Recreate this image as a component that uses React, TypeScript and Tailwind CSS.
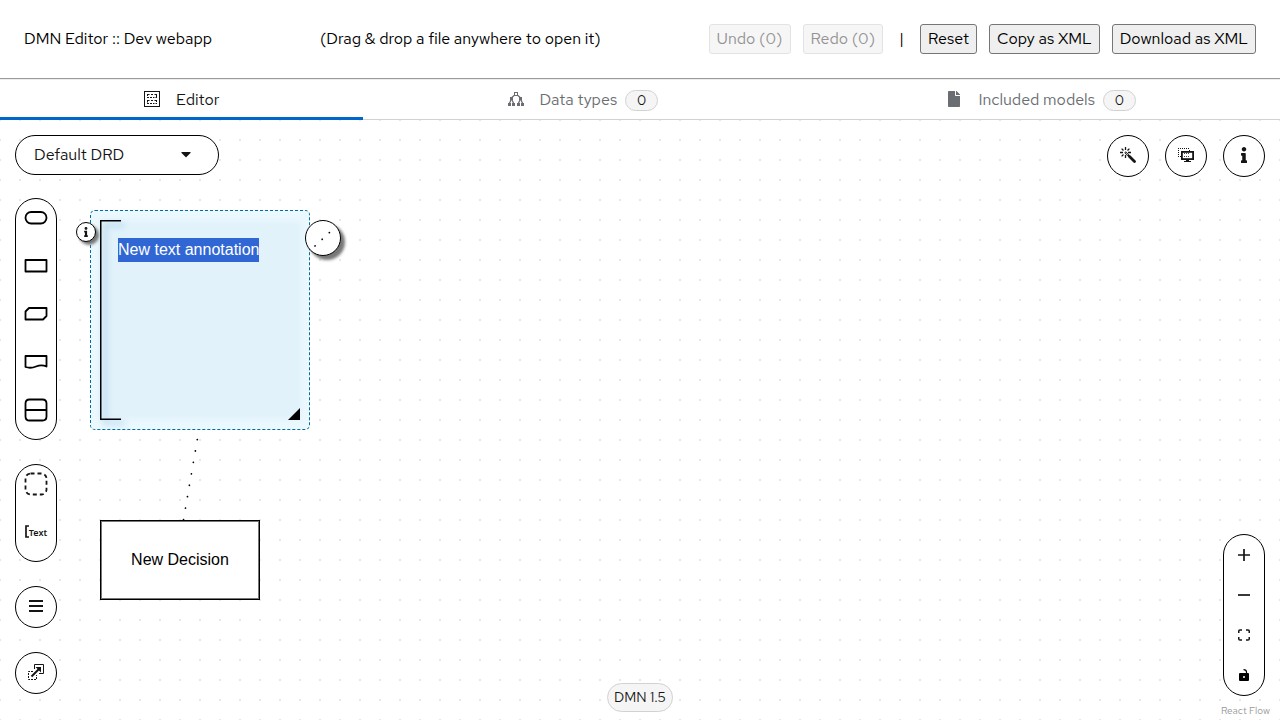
import { useEffect, useRef, useState } from "react";
import type { ReactNode } from "react";
import { FaCaretDown, FaFile, FaInfo } from "react-icons/fa";

function EditorIcon() {
  return (
    <svg width="16" height="16" viewBox="0 0 16 16" fill="none" stroke="currentColor" aria-hidden="true">
      <rect x="0.5" y="0.5" width="15" height="15" />
      <path d="M3 3.500H5.500M7 3.500H9M10.500 3.500H13M3 6.500H5M6 6.500H8M9 6.500H10.500M11.500 6.500H13M3.500 3V5M12.500 3V7M3 9.500H5.500M7 9.500H9M10.500 9.500H13M3 12.500H5M6 12.500H8M9 12.500H10.500M11.500 12.500H13M3.500 9V11M3.500 11.500V13M12.500 9V11" />
    </svg>
  );
}

function DataTypesIcon() {
  return (
    <svg width="16" height="16" viewBox="0 0 16 16" fill="none" stroke="currentColor" aria-hidden="true">
      <rect x="6.5" y="1.5" width="3" height="3" />
      <path d="M6 4.500L3.500 7M10 4.500L12.500 7M3 9L1.500 12M4 9L5.500 12M12 9L10.500 12M13 9L14.500 12" strokeWidth="1.300" />
      <path d="M2 6h3v3H2zM11 6h3v3h-3zM0 12h3v3H0zM4 12h3v3H4zM9 12h3v3H9zM13 12h3v3h-3z" fill="currentColor" stroke="none" />
    </svg>
  );
}

function WandIcon() {
  return (
    <svg width="16" height="16" viewBox="0 0 16 16" fill="none" stroke="currentColor" aria-hidden="true">
      <path d="M9.500 9.500L14.500 14.500" strokeWidth="2.800" strokeLinecap="round" />
      <path d="M5 5L9 9" strokeWidth="2" />
      <path d="M5.500 0V3M5.500 8V11M0 5.500H3M8 5.500H11M1.600 1.600L3.500 3.500M9.400 1.600L7.500 3.500M1.600 9.400L3.500 7.500" strokeWidth="1.300" />
      <path d="M5.500 5.500L8 8" stroke="white" strokeWidth="0.700" />
    </svg>
  );
}

function OverlaysIcon() {
  return (
    <svg width="16" height="16" viewBox="0 0 16 16" fill="none" stroke="currentColor" aria-hidden="true">
      <path d="M0 1.500H12M0 9.500H3" strokeDasharray="1 1" />
      <path d="M0.500 3V9M11.500 3V4" strokeDasharray="1 1" />
      <rect x="3.900" y="4.900" width="11.200" height="7.200" strokeWidth="1.800" />
      <path d="M6 6.500H12M6 9.500H12" strokeDasharray="1 1" strokeWidth="0.800" />
      <path d="M8 12.500h3v1.500h2v1H6v-1h2z" fill="currentColor" stroke="none" />
    </svg>
  );
}

function ExternalIcon() {
  return (
    <svg width="16" height="16" viewBox="0 0 16 16" fill="none" stroke="currentColor" aria-hidden="true">
      <path d="M6.500 5V0.500H15.500V9.500H11" />
      <path d="M5 7.500H0.500V15.500H8.500V11" strokeDasharray="2 1" />
      <path d="M3.500 12.500L11 5" strokeWidth="2" />
      <path d="M7.500 3H13V8.500z" fill="currentColor" stroke="none" />
    </svg>
  );
}

const shapes: { name: string; art: ReactNode }[] = [
  { name: "Input data", art: <rect x="1.500" y="7" width="21" height="11.500" rx="5.700" /> },
  { name: "Decision", art: <rect x="1.500" y="7" width="21" height="11.500" /> },
  { name: "Business knowledge model", art: <path d="M5 7H22.500V15L19 18.500H1.500V10.500Z" /> },
  { name: "Knowledge source", art: <path d="M1.500 7H22.500V17.500C18.500 15.500 15.500 16 12 17.500C8.500 19 4.500 19 1.500 18Z" /> },
  { name: "Decision service", art: <path d="M5.500 2.500H18.500Q22.500 2.500 22.500 6.500V19.500Q22.500 23.500 18.500 23.500H5.500Q1.500 23.500 1.500 19.500V6.500Q1.500 2.500 5.500 2.500ZM1.500 13H22.500" /> },
];

const round = "flex size-[42px] shrink-0 items-center justify-center rounded-full border border-black bg-white";
const devButton =
  "h-[30px] rounded-[3px] border border-[#767676] bg-[#efefef] px-[7px] disabled:border-[#e3e3e3] disabled:bg-[#f6f6f6] disabled:text-[#949494]";

function Tab({ icon, label, count, active }: { icon: ReactNode; label: string; count?: number; active?: boolean }) {
  return (
    <button
      role="tab"
      aria-selected={!!active}
      className={
        active
          ? "flex h-10 flex-auto items-center justify-center border-b-3 border-[#0066cc] pt-[3px] text-[#151515]"
          : "flex h-10 flex-auto items-center justify-center border-b border-[#d2d2d2] pt-px text-[#6a6e73]"
      }
    >
      <span className="mr-4 pb-0.5">{icon}</span>
      {label}
      {count !== undefined && (
        <span className="ml-2 flex h-[21px] w-[33px] items-center justify-center rounded-full border border-[#d2d2d2] bg-[#f5f5f5] text-sm text-[#151515]">
          {count}
        </span>
      )}
    </button>
  );
}

function AnnotationNode() {
  const editor = useRef<HTMLTextAreaElement>(null);
  useEffect(() => {
    editor.current?.focus();
    editor.current?.select();
  }, []);
  return (
    <div className="absolute top-[90px] left-[90px] size-[220px] rounded-[5px] border border-dashed border-[#006ba4] bg-[#ebf8fe]">
      <div className="absolute top-[14px] left-[14px] h-[190px] w-[192px] bg-[#e1f2fb] shadow-[0_0_6px_4px_#e1f2fb]" />
      <svg className="absolute top-[9px] left-[9px] overflow-visible" width="200" height="200" fill="none" aria-hidden="true">
        <path d="M21 1H1V199H21" stroke="#91bfe0" strokeWidth="3" className="translate-x-1 translate-y-1 opacity-60 blur-[3px]" />
        <path d="M21 0.750H0.750V199.250H21" stroke="black" strokeWidth="1.500" />
        <path d="M200 188V200H188Z" fill="black" />
      </svg>
      <textarea
        ref={editor}
        aria-label="Text annotation"
        defaultValue="New text annotation"
        className="absolute top-[27px] left-[27px] h-[150px] w-[165px] resize-none bg-transparent font-['Liberation_Sans',sans-serif] text-base text-black outline-none selection:bg-[#2f65d3]/99 selection:text-white"
      />
      <button aria-label="Properties" className="absolute top-[11px] -left-[15px] flex size-5 items-center justify-center rounded-full border border-black bg-white shadow-[3px_3px_3px_#777]">
        <FaInfo size={10} />
      </button>
      <button aria-label="Create association" className="absolute top-[9px] left-[214px] size-9 rounded-full border border-black bg-white shadow-[4px_4px_3px_#777]">
        <svg width="34" height="34" aria-hidden="true">
          <path d="M9 25L24 11" stroke="black" strokeWidth="1.700" strokeDasharray="0.100 9.700" strokeLinecap="round" />
        </svg>
      </button>
    </div>
  );
}

export default function App() {
  const [drd, setDrd] = useState("Default DRD");
  return (
    <div className="flex min-h-screen flex-col bg-white font-['Red_Hat_Text','Open_Sans',sans-serif] text-base text-[#151515]">
      <header className="flex h-20 shrink-0 items-center justify-between border-b border-[#eeeeee] px-6 pb-0.5 text-black shadow-[inset_0_-1px_0_#9a9a9a]">
        <h1>DMN Editor :: Dev webapp</h1>
        <p>(Drag &amp; drop a file anywhere to open it)</p>
        <div className="flex items-center gap-3">
          <button className={devButton} disabled>Undo (0)</button>
          <button className={devButton} disabled>Redo (0)</button>
          <span className="w-[13px] text-center">|</span>
          <button className={devButton}>Reset</button>
          <button className={devButton}>Copy as XML</button>
          <button className={devButton}>Download as XML</button>
        </div>
      </header>

      <nav role="tablist" className="flex shrink-0">
        <Tab icon={<EditorIcon />} label="Editor" active />
        <Tab icon={<DataTypesIcon />} label="Data types" count={0} />
        <Tab icon={<FaFile size={16} />} label="Included models" count={0} />
      </nav>

      <main className="relative flex grow flex-col bg-[radial-gradient(circle,#e8e8e8_1px,transparent_1.5px)] bg-[length:20px_20px] bg-[position:-10px_-10px]">
        <div className="absolute inset-0 overflow-hidden">
          <AnnotationNode />
          <svg className="absolute top-0 left-0" width="320" height="420" fill="none" aria-hidden="true">
            <path d="M197.300 319.500L180 420" stroke="black" strokeWidth="1.700" strokeDasharray="0.100 11.500" strokeLinecap="round" />
          </svg>
          <div className="absolute top-[400px] left-[100px] flex h-20 w-40 items-center justify-center border border-black bg-white font-['Liberation_Sans',sans-serif] text-black shadow-[inset_0_0_0_1px_#777]">
            New Decision
          </div>
        </div>

        <div className="relative flex grow justify-between p-[15px] pb-6">
          <div className="flex flex-col items-start gap-6">
            <div className="relative -mb-px">
              <select
                aria-label="Diagram"
                value={drd}
                onChange={(e) => setDrd(e.target.value)}
                className="h-10 w-[204px] appearance-none rounded-full border border-black bg-white pl-[18px]"
              >
                <option>Default DRD</option>
              </select>
              <FaCaretDown size={16} className="pointer-events-none absolute top-[11px] right-[25px]" />
            </div>
            <div className="flex w-[42px] flex-col items-center justify-between rounded-[21px] border border-black bg-white">
              {shapes.map((s) => (
                <button key={s.name} aria-label={s.name} className="flex h-12 w-full justify-center pt-1.5">
                  <svg width="24" height="26" viewBox="0 0 24 26" fill="none" stroke="black" strokeWidth="1.800" strokeLinejoin="round" aria-hidden="true">
                    {s.art}
                  </svg>
                </button>
              ))}
            </div>
            <div className="flex w-[42px] flex-col items-center rounded-[21px] border border-black bg-white">
              <button aria-label="Group" className="flex h-12 w-full justify-center pt-[7px]">
                <svg width="24" height="24" fill="none" stroke="currentColor" strokeWidth="1.800" aria-hidden="true">
                  <rect x="1.500" y="1.500" width="21" height="21" rx="5" strokeDasharray="4 3" />
                </svg>
              </button>
              <button aria-label="Text annotation" className="flex h-12 w-full items-start justify-center pt-3 font-['Noto_Sans',sans-serif] text-[9px] leading-[16px] font-semibold">
                <svg width="4" height="13" fill="none" stroke="currentColor" strokeWidth="1.700" aria-hidden="true">
                  <path d="M4 1H1V12H4" />
                </svg>
                Text
              </button>
            </div>
            <button aria-label="DRG nodes" className={round}>
              <svg width="14" height="14" fill="none" stroke="currentColor" strokeWidth="2" aria-hidden="true">
                <path d="M0 1H14M0 6H14M0 11H14" />
              </svg>
            </button>
            <button aria-label="External nodes" className={`${round} pb-0.5`}>
              <ExternalIcon />
            </button>
          </div>

          <div className="flex flex-col items-end justify-between">
            <div className="flex gap-4">
              <button aria-label="Autolayout" className={`${round} pb-0.5`}><WandIcon /></button>
              <button aria-label="Overlays" className={`${round} pb-0.5`}><OverlaysIcon /></button>
              <button aria-label="Properties panel" className={`${round} pb-0.5`}><FaInfo size={16} /></button>
            </div>
            <div className="flex w-[42px] flex-col rounded-[21px] border border-black bg-white">
              <button aria-label="Zoom in" className="flex h-10 items-center justify-center">
                <svg width="12" height="12" stroke="currentColor" strokeWidth="1.700" aria-hidden="true"><path d="M0 6H12M6 0V12" /></svg>
              </button>
              <button aria-label="Zoom out" className="flex h-10 items-center justify-center">
                <svg width="12" height="12" stroke="currentColor" strokeWidth="1.700" aria-hidden="true"><path d="M0 6H12" /></svg>
              </button>
              <button aria-label="Fit view" className="flex h-10 items-center justify-center">
                <svg width="12" height="12" fill="none" stroke="currentColor" strokeWidth="1.500" aria-hidden="true">
                  <path d="M0.750 4V2Q0.750 1 2 1H4M8 1H10Q11.250 1 11.250 2V4M11.250 8V10Q11.250 11 10 11H8M4 11H2Q0.750 11 0.750 10V8" />
                </svg>
              </button>
              <button aria-label="Toggle interactivity" className="flex h-10 items-center justify-center">
                <svg width="10" height="13" fill="none" aria-hidden="true">
                  <path d="M1 4H9Q10 4 10 5V11Q10 12 9 12H1Q0 12 0 11V5Q0 4 1 4ZM5 7A1 1 0 1 0 5 9A1 1 0 1 0 5 7Z" fill="black" fillRule="evenodd" />
                  <path d="M4.500 0.600Q7.500 0.600 7.500 3V4.500" stroke="black" strokeWidth="1.200" />
                </svg>
              </button>
            </div>
          </div>
        </div>

        <div className="absolute bottom-2 left-1/2 flex h-[29px] -translate-x-1/2 items-center rounded-full border border-[#d2d2d2] bg-[#f5f5f5] px-1.5 pb-0.5 text-sm">
          DMN 1.5
        </div>
        <a href="#react-flow" className="absolute right-[10px] bottom-[2px] text-[10px] leading-[15px] text-[#999999]">React Flow</a>
      </main>
    </div>
  );
}
